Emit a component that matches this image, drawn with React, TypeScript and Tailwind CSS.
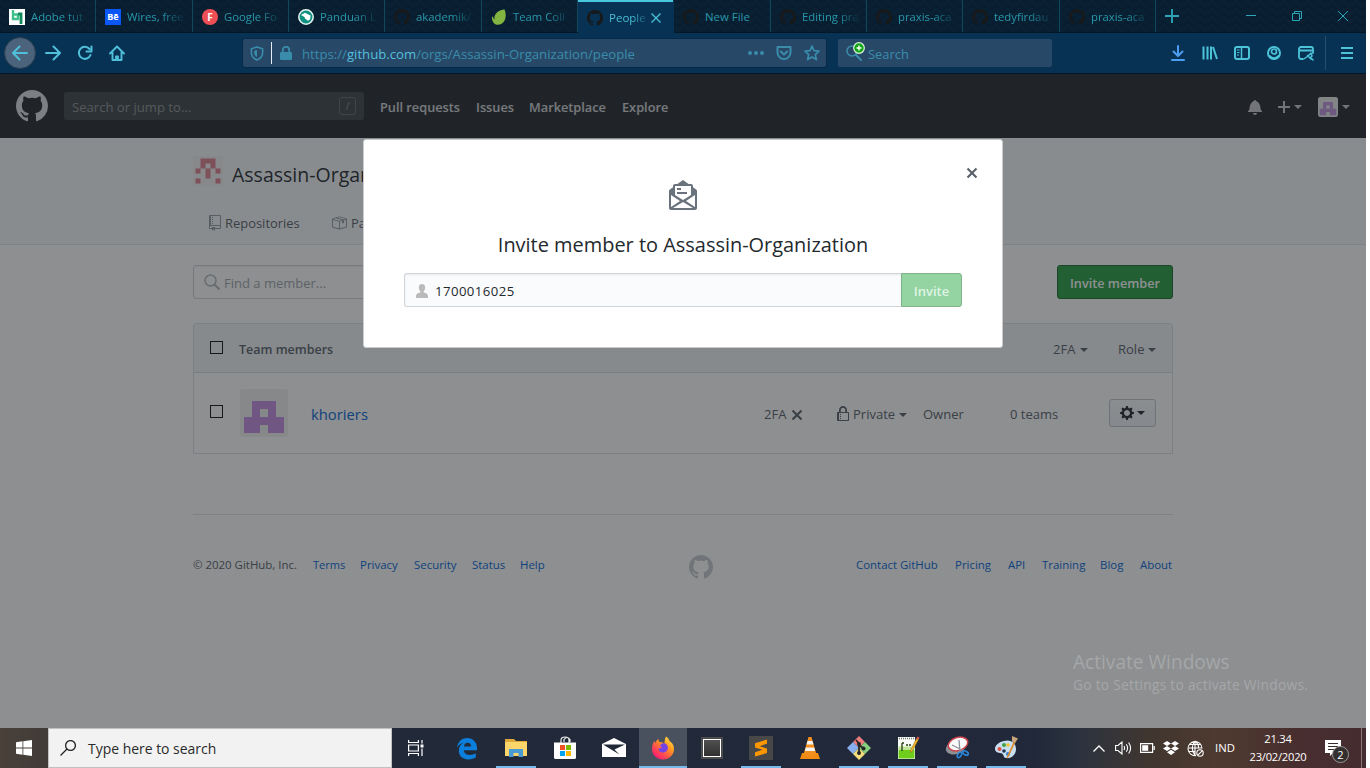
import React from "react";

const MARK =
  "M8 0C3.58 0 0 3.58 0 8c0 3.54 2.29 6.53 5.47 7.59.4.07.55-.17.55-.38 0-.19-.01-.82-.01-1.49-2.01.37-2.53-.49-2.69-.94-.09-.23-.48-.94-.82-1.13-.28-.15-.68-.52-.01-.53.63-.01 1.08.58 1.23.82.72 1.21 1.87.87 2.33.66.07-.52.28-.87.51-1.07-1.78-.2-3.64-.89-3.64-3.95 0-.87.31-1.59.82-2.15-.08-.2-.36-1.02.08-2.12 0 0 .67-.21 2.2.82.64-.18 1.32-.27 2-.27.68 0 1.36.09 2 .27 1.53-1.04 2.2-.82 2.2-.82.44 1.1.16 1.92.08 2.12.51.56.82 1.27.82 2.15 0 3.07-1.87 3.75-3.65 3.95.29.25.54.73.54 1.48 0 1.07-.01 1.93-.01 2.2 0 .21.15.46.55.38A8.013 8.013 0 0016 8c0-4.42-3.58-8-8-8z";
const X_PATH =
  "M7.48 8l3.75 3.75-1.48 1.48L6 9.48l-3.75 3.75-1.48-1.48L4.52 8 .77 4.25l1.48-1.48L6 6.52l3.75-3.75 1.48 1.48L7.48 8z";
const REPO =
  "M4 9H3V8h1v1zm0-3H3v1h1V6zm0-2H3v1h1V4zm0-2H3v1h1V2zm8-1v12c0 .55-.45 1-1 1H6v2l-1.5-1.5L3 16v-2H1c-.55 0-1-.45-1-1V1c0-.55.45-1 1-1h10c.55 0 1 .45 1 1zm-1 10H1v2h2v-1h3v1h5v-2zm0-10H2v9h9V1z";
const PACKAGE =
  "M1 4.27v7.47c0 .45.3.84.75.97l6.5 1.73c.16.05.34.05.5 0l6.5-1.73c.45-.13.75-.52.75-.97V4.27c0-.45-.3-.84-.75-.97l-6.5-1.74a1.4 1.4 0 0 0-.5 0L1.75 3.3c-.45.13-.75.52-.75.97zm7 9.09l-6-1.59V5l6 1.61v6.75zM2 4l2.5-.67L11 5.06l-2.5.67L2 4zm13 7.77l-6 1.59V6.61l2-.55V8.5l2-.53V5.53L15 5v6.77zm-2-7.24L6.5 2.8l2-.53L15 4l-2 .53z";
const BELL =
  "M14 12v1H0v-1l.73-.58c.77-.77.81-2.55 1.19-4.42C2.69 3.23 6 2 6 2c0-.55.45-1 1-1s1 .45 1 1c0 0 3.39 1.23 4.16 5 .38 1.88.42 3.66 1.19 4.42l.66.58H14zm-7 4c1.11 0 2-.89 2-2H5c0 1.11.89 2 2 2z";
const PLUS = "M12 9H7v5H5V9H0V7h5V2h2v5h5v2z";
const GEAR =
  "M14 8.77v-1.6l-1.94-.64-.45-1.09.88-1.84-1.13-1.13-1.81.91-1.09-.45-.69-1.92h-1.6l-.63 1.94-1.11.45-1.84-.88-1.13 1.13.91 1.81-.45 1.09L0 7.23v1.59l1.94.64.45 1.09-.88 1.84 1.13 1.13 1.81-.91 1.09.45.69 1.92h1.59l.63-1.94 1.11-.45 1.84.88 1.13-1.13-.92-1.81.47-1.09L14 8.75v.02zM7 11c-1.66 0-3-1.34-3-3s1.34-3 3-3 3 1.34 3 3-1.34 3-3 3z";
const LOCK =
  "M4 13H3v-1h1v1zm8-6v7c0 .55-.45 1-1 1H1c-.55 0-1-.45-1-1V7c0-.55.45-1 1-1h1V4c0-2.2 1.8-4 4-4s4 1.8 4 4v2h1c.55 0 1 .45 1 1zM3.8 6h4.41V4c0-1.22-.98-2.2-2.2-2.2-1.22 0-2.2.98-2.2 2.2v2H3.8zM11 7H2v7h9V7zM4 8H3v1h1V8zm0 2H3v1h1v-1z";
const MAIL_READ =
  "M6 5H4V4h2v1zm3 1H4v1h5V6zm5-.48V14c0 .55-.45 1-1 1H1c-.55 0-1-.45-1-1V5.52c0-.33.16-.63.42-.81L2 3.58V3c0-.55.45-1 1-1h1.2L7 0l2.8 2H11c.55 0 1 .45 1 1v.58l1.58 1.13c.27.19.42.48.42.81zM3 7.5L7 10l4-2.5V3H3v4.5zm-2 6l4.5-3-4.5-3v6zm11 .5l-5-3-5 3h10zm1-6.5l-4.5 3 4.5 3v-6z";

function Oct({ d, w = 16, className = "" }: { d: string; w?: number; className?: string }) {
  return (
    <svg viewBox={`0 0 ${w} 16`} fill="currentColor" fillRule="evenodd" className={`block shrink-0 ${className}`}>
      <path d={d} />
    </svg>
  );
}

function Caret({ className = "" }: { className?: string }) {
  return <span className={`block h-0 w-0 shrink-0 border-x-4 border-t-4 border-x-transparent border-t-current ${className}`} />;
}

type TabInfo = { title: string; icon: React.ReactNode; active?: boolean; w: string };

const mark = <Oct d={MARK} className="h-4 w-4 text-[#17191b]" />;

const tabs: TabInfo[] = [
  {
    title: "Adobe tut",
    w: "w-[96px]",
    icon: (
      <svg viewBox="0 0 16 16" className="h-4 w-4">
        <rect width="16" height="16" fill="#fff" />
        <path d="M4 1v9h5V5.500H4" fill="none" stroke="#3fc08a" strokeWidth="2.4" />
        <path d="M9 5h3v10" fill="none" stroke="#0f8a5a" strokeWidth="2.800" />
      </svg>
    ),
  },
  {
    title: "Wires, free",
    w: "w-[97px]",
    icon: <span className="flex h-4 w-4 items-center justify-center bg-[#0a57f5] text-[9px] font-bold text-white">Bē</span>,
  },
  {
    title: "Google Fo",
    w: "w-[96px]",
    icon: <span className="flex h-4 w-4 items-center justify-center rounded-full bg-[#ee4f55] text-[10px] font-bold text-white">F</span>,
  },
  {
    title: "Panduan L",
    w: "w-[96px]",
    icon: (
      <svg viewBox="0 0 16 16" className="h-4 w-4">
        <circle cx="8" cy="8" r="7.200" fill="#0f9182" stroke="#e8f4f2" strokeWidth="1.500" />
        <path d="M3 6l4-2.200 5.500 2.700-.3 3.800-2.200 1.400-3-2.200-.5-1.500z" fill="#fff" />
      </svg>
    ),
  },
  { title: "akademik/", w: "w-[97px]", icon: mark },
  {
    title: "Team Coll",
    w: "w-[96px]",
    icon: (
      <svg viewBox="0 0 16 16" className="h-4 w-4">
        <path d="M13.500.4C14.800 3 15.600 9 12.800 12.800 10.500 16 6 17 3 14.300 1.500 12.800.8 10.500 1 8c0-.7 1-.7 1.100.2.3 1.300.8 2 1.400 2.300C2.500 4.500 8 .5 13.500.4z" fill="#82b541" />
      </svg>
    ),
  },
  { title: "People", w: "w-[96px]", icon: mark, active: true },
  { title: "New File", w: "w-[97px]", icon: mark },
  { title: "Editing pra", w: "w-[96px]", icon: mark },
  { title: "praxis-aca", w: "w-[96px]", icon: mark },
  { title: "tedyfirdau", w: "w-[97px]", icon: mark },
  { title: "praxis-aca", w: "w-[96px]", icon: mark },
];

function TabStrip() {
  return (
    <div className="flex h-[33px] border-b border-[#041726] bg-[#0a2134] bg-[linear-gradient(135deg,rgba(3,14,26,0.16)_25%,transparent_25%),linear-gradient(225deg,rgba(3,14,26,0.16)_25%,transparent_25%),linear-gradient(315deg,rgba(3,14,26,0.16)_25%,transparent_25%),linear-gradient(45deg,rgba(3,14,26,0.16)_25%,transparent_25%)] bg-[length:12px_8px] bg-[position:-6px_0,-6px_0,0_0,0_0] text-[#2898aa]">
      {tabs.map((t, i) => (
        <div
          key={i}
          className={`flex shrink-0 items-center border-r pl-[9px] pt-[2px] ${t.w} ${
            t.active ? "-mb-px border-[#083254] bg-[#083254] text-[#48bfd4] shadow-[inset_0_2px_0_#48c8dc]" : "border-[#12465a]"
          }`}
        >
          <span className="mr-[6px] shrink-0">{t.icon}</span>
          <span
            className={`whitespace-nowrap leading-4 ${
              t.active
                ? "w-[38px] text-[11.500px] [mask-image:linear-gradient(90deg,#000_60%,rgba(0,0,0,0.2)_98%)]"
                : t.title === "New File"
                  ? "w-[60px] text-[11.400px]"
                  : "w-[56px] text-[11.300px] [mask-image:linear-gradient(90deg,#000_62%,rgba(0,0,0,0.15)_98%)]"
            }`}
          >
            {t.title}
          </span>
          {t.active && (
            <svg viewBox="0 0 10 10" className="ml-[4px] h-[10px] w-[10px]" stroke="currentColor" strokeWidth="1.400">
              <path d="M.5.500l9 9M9.500.500l-9 9" />
            </svg>
          )}
        </div>
      ))}
      <svg viewBox="0 0 14 14" className="ml-[9px] mt-[9px] h-[14px] w-[14px]" stroke="#2fa6b8" strokeWidth="1.800">
        <path d="M7 0v14M0 7h14" />
      </svg>
      <div className="ml-auto mr-[18px] flex items-center gap-[36px] text-[#2fa6b8]">
        <svg viewBox="0 0 10 10" className="h-[10px] w-[10px]" stroke="currentColor">
          <path d="M0 4.500h10" />
        </svg>
        <svg viewBox="0 0 10 10" className="h-[10px] w-[10px]" stroke="currentColor" fill="none">
          <path d="M.5 2.500h7v7h-7zM2.500 2.500v-2h7v7h-2" />
        </svg>
        <svg viewBox="0 0 10 10" className="h-[10px] w-[10px]" stroke="currentColor">
          <path d="M0 0l10 10M10 0L0 10" />
        </svg>
      </div>
    </div>
  );
}

function I({ children, className = "" }: { children: React.ReactNode; className?: string }) {
  return (
    <svg viewBox="0 0 16 16" fill="none" stroke="currentColor" strokeWidth="2" strokeLinecap="round" strokeLinejoin="round" className={`block h-4 w-4 shrink-0 ${className}`}>
      {children}
    </svg>
  );
}

function Toolbar() {
  return (
    <div className="flex h-[41px] items-center border-b border-[#04172a] bg-[#083254] pl-1 text-[#4fbfda]">
      <span className="flex h-8 w-8 items-center justify-center rounded-full border border-[#2b3d4f] bg-[#4b647c]">
        <I><path d="M15 8H1M7.500 1.500L1 8l6.500 6.500" /></I>
      </span>
      <I className="ml-[9px]"><path d="M1 8h14M8.500 1.500L15 8l-6.500 6.500" /></I>
      <I className="ml-4"><path d="M13.500 10A6 6 0 1 1 12.500 4M14.500 1.500v5h-5" /></I>
      <I className="ml-4"><path d="M1 8.500L8 1.500l7 7M3.500 7.500V15h9V7.500M7 15v-3.500h2V15" strokeWidth="1.900" /></I>
      <div className="ml-[118px] flex h-[28px] w-[583px] items-center rounded-[2px] bg-[#284867] pl-[7px] text-[#3a8cab] shadow-[0_0_0_1px_#072a48]">
        <svg viewBox="0 0 14 16" className="h-[15px] w-[14px]" fill="none" stroke="currentColor" strokeWidth="1.700">
          <path d="M7 1L13 3v4c0 4-2 6.500-6 8-4-1.500-6-4-6-8V3z" />
          <path d="M7 4.200v7.500c-2-1-3-2.300-3-4.700v-2z" fill="currentColor" stroke="none" />
        </svg>
        <span className="ml-[7px] h-[22px] w-px bg-[#e6edf3]" />
        <svg viewBox="0 0 12 14" className="ml-2 h-[14px] w-[12px]" fill="currentColor">
          <rect y="6" width="12" height="8" rx="1.200" />
          <path d="M2.800 7V4a3.200 3.200 0 016.400 0v3" fill="none" stroke="currentColor" strokeWidth="1.800" />
        </svg>
        <span className="ml-[10px] mt-px w-[446px] whitespace-nowrap text-[13.180px] leading-5">
          https://<span className="text-[#55bfdd]">github.com</span>/orgs/Assassin-Organization/people
        </span>
        <svg viewBox="0 0 16 4" className="h-1 w-4" fill="currentColor">
          <circle cx="2" cy="2" r="2" /><circle cx="8" cy="2" r="2" /><circle cx="14" cy="2" r="2" />
        </svg>
        <I className="ml-3"><path d="M1.500 2h13v5.500a6.500 6.500 0 01-13 0zM4.800 6.500L8 9.500l3.200-3" /></I>
        <I className="ml-3"><path d="M8 1l2 4.700 5 .5-3.700 3.400 1 5L8 12l-4.400 2.600 1.100-5L1 6.200l5-.5z" strokeWidth="1.700" /></I>
      </div>
      <div className="ml-3 flex h-[28px] w-[214px] items-center rounded-[2px] bg-[#284867] pl-2 text-[#3a8cab]">
        <span className="relative">
          <I><circle cx="6" cy="6" r="5" strokeWidth="1.500" /><path d="M10 10l5 5" /></I>
          <svg viewBox="0 0 12 12" className="absolute -top-[3px] left-[7px] h-[12px] w-[12px]">
            <circle cx="6" cy="6" r="5.300" fill="#12a512" stroke="#dff3df" strokeWidth="1.200" />
            <path d="M6 3.500v5M3.500 6h5" stroke="#fff" strokeWidth="1.400" />
          </svg>
        </span>
        <span className="ml-[6px] mt-px text-[12.900px] leading-5">Search</span>
      </div>
      <div className="ml-auto mr-[11px] flex items-center text-[#4cc3d9]">
        <div className="flex gap-4">
          <I className="text-[#4a9df0]"><path d="M8 1v9.500M3.500 6.500L8 11l4.500-4.500M2 15h12" /></I>
          <I><path d="M1.500 1.500v13M5.500 1.500v13M9 1.500v13M11 2l4 12" strokeWidth="2" strokeLinecap="butt" /></I>
          <I><rect x="1" y="2" width="14" height="12" rx="2" /><path d="M7.500 2v12" strokeWidth="1.500" /><path d="M3 5h2.500M3 7.500h2.500M3 10h2" strokeWidth="1" strokeLinecap="butt" /></I>
          <I><circle cx="8" cy="8" r="6" /><circle cx="8" cy="6.500" r="2.500" strokeWidth="1.700" /><path d="M3.500 11c3 3 6 3 9 0" /></I>
          <I><path d="M5 14H3a2 2 0 01-2-2V4a2 2 0 012-2h10a2 2 0 012 2v4M1 5.500h14" strokeWidth="1.800" /><path d="M6.500 13.500l3-2M9.500 10.500l3.500 3.500M10 11l3-3 1 3-2 2zM13 13l2 2" strokeWidth="1.500" /></I>
        </div>
        <span className="ml-[11px] h-[34px] w-px bg-[#2b4d6c]" />
        <I className="ml-[13px]"><path d="M2 3h12M2 8h12M2 13h12" strokeLinecap="butt" /></I>
      </div>
    </div>
  );
}

function Identicon({ className = "" }: { className?: string }) {
  return (
    <svg viewBox="0 0 48 48" className={`block shrink-0 ${className}`}>
      <rect width="48" height="48" rx="3" fill="#f0f0f0" />
      <path d="M12 12h24v16h8v16H28v-8h-8v8H4V28h8zM20 20v8h8v-8z" fillRule="evenodd" fill="#c28ce2" />
    </svg>
  );
}

function OrgIcon() {
  return (
    <svg viewBox="0 0 30 30" className="h-[30px] w-[30px] shrink-0">
      <rect width="30" height="30" fill="#f0f0f0" />
      <path
        d="M7.500 2.500H22.500V12.500H17.500V7.500H12.500V12.500H7.500zM2.500 12.500H7.500V17.500H2.500zM22.500 12.500H27.500V17.500H22.500zM12.500 12.500H17.500V22.500H12.500zM2.500 22.500H7.500V27.500H2.500zM22.500 22.500H27.500V27.500H22.500z"
        fill="#e08090"
      />
    </svg>
  );
}

function GitHubHeader() {
  return (
    <div className="flex h-16 items-center bg-[#24292e] px-4 text-[12.750px] font-semibold leading-5 text-white/80">
      <Oct d={MARK} className="h-8 w-8 text-white/85" />
      <div className="ml-4 mr-4 flex h-[28px] w-[300px] items-center justify-between rounded-[3px] bg-[#3f4448] pl-2 pr-2 font-normal text-[#8f9395]">
        <span className="mt-[2px] text-[13.100px]">Search or jump to...</span>
        <span className="flex h-[18px] w-[17px] items-center justify-center rounded-[3px] border border-[#666b6f] text-[10px]">/</span>
      </div>
      <span className="mt-[2px] w-[96px] whitespace-nowrap">Pull requests</span>
      <span className="mt-[2px] w-[53px]">Issues</span>
      <span className="mt-[2px] w-[93px]">Marketplace</span>
      <span className="mt-[2px]">Explore</span>
      <div className="ml-auto mt-[2px] flex items-center text-white/75">
        <Oct d={BELL} w={14} className="mr-4 h-4 w-[14px]" />
        <Oct d={PLUS} w={12} className="mr-1 h-4 w-[12px]" />
        <Caret className="mr-4" />
        <span className="mr-1 overflow-hidden rounded-[3px] bg-white/70"><Identicon className="h-5 w-5 opacity-85" /></span>
        <Caret />
      </div>
    </div>
  );
}

function Checkbox() {
  return <span className="block h-[13px] w-[13px] border border-[#111]" />;
}

function Page() {
  return (
    <div className="h-[654px] bg-white text-[#586069]">
      <GitHubHeader />
      <div className="h-[107px] border-b border-[#e1e4e8] bg-[#f6f9fa] pl-[193px] pt-[18px]">
        <div className="flex">
          <OrgIcon />
          <span className="ml-[9px] mt-1 text-[19.500px] leading-[30px] text-[#24292e]">Assassin-Organization</span>
        </div>
        <div className="ml-4 mt-[23px] flex items-center text-[12.950px] leading-5">
          <Oct d={REPO} w={12} className="h-4 w-3 text-[#959da5]" />
          <span className="ml-1 w-[106px]">Repositories</span>
          <Oct d={PACKAGE} className="h-4 w-4 text-[#959da5]" />
          <span className="ml-1">Packages</span>
        </div>
      </div>
      <div className="ml-[193px] w-[980px]">
        <div className="flex justify-between pt-5">
          <div className="flex h-[34px] w-[300px] items-center rounded-[3px] border border-[#d1d5da] pl-[10px] text-[13px] text-[#a0a5aa] shadow-[inset_0_1px_2px_rgba(27,31,35,0.075)]">
            <svg viewBox="0 0 16 16" className="h-4 w-4" fill="none" stroke="#b4b8bb" strokeWidth="1.500">
              <circle cx="6.500" cy="6.500" r="5.500" /><path d="M10.500 10.500l5 5" strokeWidth="2" />
            </svg>
            <span className="ml-1 mt-[3px]">Find a member...</span>
          </div>
          <div className="flex h-[34px] w-[116px] items-center justify-center rounded-[3px] border border-[#1c6a30] bg-[#28a142] pt-[3px] text-[12.700px] font-semibold text-white">
            Invite member
          </div>
        </div>
        <div className="mt-6 h-[131px] rounded-t-[3px] border border-[#dde1e5] text-[13px]">
          <div className="flex h-[49px] items-center border-b border-[#d5dadf] bg-[#f1f5f7] pl-4">
            <span className="-mt-px"><Checkbox /></span>
            <span className="ml-4 mt-[4px] w-[814px] text-[12.500px] font-semibold">Team members</span>
            <span className="mt-[4px] w-[27px]">2FA</span>
            <Caret className="mr-[30px] mt-[4px]" />
            <span className="mt-[4px] w-[30px]">Role</span>
            <Caret className="mt-[4px]" />
          </div>
          <div className="flex h-[80px] items-center pl-4">
            <span className="-mt-1"><Checkbox /></span>
            <Identicon className="ml-[17px] h-12 w-12" />
            <span className="ml-[23px] mt-[2px] w-[453px] text-[14.800px] text-[#0366d6]">khoriers</span>
            <span className="mt-[3px] w-[27px]">2FA</span>
            <Oct d={X_PATH} w={12} className="mt-[3px] h-4 w-3" />
            <Oct d={LOCK} w={12} className="ml-[34px] mt-[2px] h-4 w-3" />
            <span className="ml-1 mt-[3px] w-[46px]">Private</span>
            <Caret className="mt-[3px]" />
            <span className="ml-4 mt-[3px] w-[87px]">Owner</span>
            <span className="mt-[3px] w-[99px]">0 teams</span>
            <span className="flex h-[28px] w-[47px] items-center justify-center gap-[3px] rounded-[3px] border border-[#c3c7ca] bg-gradient-to-b from-[#fafbfc] to-[#eff3f6] text-[#24292e]">
              <Oct d={GEAR} w={14} className="h-4 w-[14px]" />
              <Caret />
            </span>
          </div>
        </div>
        <div className="mt-[60px] flex items-start border-t border-[#e1e4e8] pt-[40px] text-[11.450px] leading-[20px]">
          <span className="w-[120px] whitespace-nowrap">© 2020 GitHub, Inc.</span>
          <span className="flex w-[376px] text-[#0366d6]">
            <span className="w-[47px] text-[11px]">Terms</span>
            <span className="w-[54px]">Privacy</span>
            <span className="w-[58px]">Security</span>
            <span className="w-[48px]">Status</span>
            <span>Help</span>
          </span>
          <Oct d={MARK} className="h-6 w-6 text-[#c6cbd1]" />
          <span className="ml-auto flex text-[#0366d6]">
            <span className="w-[99px]">Contact GitHub</span>
            <span className="w-[53px]">Pricing</span>
            <span className="w-[34px]">API</span>
            <span className="w-[58px]">Training</span>
            <span className="w-[40px]">Blog</span>
            <span className="w-[33px]">About</span>
          </span>
        </div>
      </div>
    </div>
  );
}

function Modal() {
  return (
    <div className="absolute left-[363px] top-[65px] flex h-[209px] w-[640px] flex-col items-center rounded-[3px] border border-[#c9cbcd] bg-white px-10 pt-[40px] text-[#24292e]">
      <Oct d={X_PATH} w={12} className="absolute right-6 top-[25px] h-4 w-3 text-[#586069]" />
      <Oct d={MAIL_READ} w={14} className="h-8 w-[28px] text-[#6a737d]" />
      <h2 className="mt-[18px] whitespace-nowrap text-[19.950px] leading-[30px]">Invite member to Assassin-Organization</h2>
      <div className="mt-[13px] flex h-[34px] w-[558px]">
        <div className="flex flex-1 items-center rounded-l-[3px] border border-r-0 border-[#d1d5da] bg-[#fafbfc] pl-[11px] shadow-[inset_0_1px_2px_rgba(27,31,35,0.075)]">
          <svg viewBox="0 0 12 14" className="mt-[1px] h-[14px] w-3" fill="#bababa">
            <path d="M6 0c2 0 3.200 1.300 3.200 3.300 0 1.700-.6 3-1.500 3.900v1.300c2.800.7 4.300 1.400 4.300 3.700V14H0v-1.800c0-2.300 1.500-3 4.300-3.700V7.200C3.400 6.300 2.800 5 2.800 3.300 2.800 1.300 4 0 6 0z" />
          </svg>
          <span className="ml-[7px] mt-[2px] text-[13.200px] leading-5 tracking-[0.42px]">1700016025</span>
        </div>
        <div className="flex w-[61px] items-center justify-center rounded-r-[3px] border border-[#7fb38c] bg-[#94d3a2] pt-[3px] text-[13px] font-semibold text-[#dff5e4]">
          Invite
        </div>
      </div>
    </div>
  );
}

const apps: { on?: boolean; focus?: boolean; icon: React.ReactNode }[] = [
  {
    icon: (
      <svg viewBox="0 0 24 24" className="h-6 w-6">
        <path d="M2 11.500C3 5 7.500 2 12.300 2 18 2 22 6.500 22 12v2.300H8.800c.2 3 2.700 4.700 6 4.700 2.200 0 4.200-.6 6-1.700v4.300c-2 1.200-4.500 1.800-7.200 1.800-6 0-9.800-3.700-9.800-9 0-3.300 1.700-6 4.700-7.700C5.500 7.600 3.500 9 2 11.500zM8.900 10.500h7.300c-.1-2.300-1.400-3.700-3.500-3.700s-3.500 1.500-3.800 3.700z" fill="#0c7fdc" fillRule="evenodd" />
      </svg>
    ),
  },
  {
    on: true,
    icon: (
      <svg viewBox="0 0 24 24" className="h-6 w-6">
        <path d="M1 3h9l2 2h11v4H1z" fill="#e0a73a" /><path d="M1 6h22v14H1z" fill="#fcd66b" />
        <path d="M5 13h14v8h-4.500v-4h-5v4H5z" fill="#4a9bd3" />
      </svg>
    ),
  },
  {
    icon: (
      <svg viewBox="0 0 24 24" className="h-6 w-6">
        <path d="M8 7V4q0-3 4-3t4 3v3M11 6V3.500q3-4 6 0V6" fill="none" stroke="#eee" strokeWidth="1.200" />
        <path d="M1 6.500h22V22l-1 1H2l-1-1z" fill="#fff" />
        <path d="M7 9h5v5H7z" fill="#f25022" /><path d="M13 9h5v5h-5z" fill="#7fba00" /><path d="M7 15h5v5H7z" fill="#00a4ef" /><path d="M13 15h5v5h-5z" fill="#ffb900" />
      </svg>
    ),
  },
  {
    icon: (
      <svg viewBox="0 0 24 24" className="h-6 w-6">
        <path d="M0 8l12-6 12 6v13H0z" fill="#fff" /><path d="M1 8.500h22L12.500 13.500l5 5L10 14z" fill="#1f2836" />
      </svg>
    ),
  },
  {
    on: true,
    focus: true,
    icon: (
      <svg viewBox="0 0 24 24" className="h-6 w-6">
        <defs>
          <linearGradient id="fx" x1="1" y1="0" x2="0.200" y2="1"><stop offset="0" stopColor="#fff14f" /><stop offset="0.400" stopColor="#ff9a20" /><stop offset="0.750" stopColor="#ff4355" /><stop offset="1" stopColor="#f4157a" /></linearGradient>
        </defs>
        <path d="M15 .5c2 1 3 3 3.500 4.500C20 6 23 8 23 13c0 6-5 10.500-11 10.500S1 19 1 13c0-4 1.500-6.500 2.300-8l1 2c1-2.200 2.200-3.500 3-4l1 3c2 0 4 .5 5 1.500.5-2.500.5-5 1.700-7z" fill="url(#fx)" />
        <path d="M11 7.500c4-1 6.500 2 5.800 5.200-.6 3-4 4.700-7 3.300-2-1-2.600-2.700-1.800-4 1 .6 2.500.5 3-.6-2-.3-2.300-2 0-3.900z" fill="#7542e5" />
      </svg>
    ),
  },
  {
    icon: (
      <span className="flex h-[22px] w-[22px] items-center justify-center bg-[#4c4c4c]">
        <span className="h-[18px] w-[18px] border border-white bg-gradient-to-b from-[#505050] to-[#303030]" />
      </span>
    ),
  },
  {
    on: true,
    icon: (
      <svg viewBox="0 0 24 24" className="h-6 w-6">
        <rect width="24" height="24" rx="1" fill="#484848" />
        <path d="M18 3.500v4.200l-7.500 2.500 7.500 2.300v4.500L6 20.500v-4.300l7.500-2.400L6 11.500V7.200z" fill="#ff9800" />
      </svg>
    ),
  },
  {
    icon: (
      <svg viewBox="0 0 24 24" className="h-6 w-6">
        <path d="M4 17h16l2 6H2z" fill="#f08a10" /><path d="M10.500 1h3l5 17.500c-3 2.500-10 2.500-13 0z" fill="#f18e1c" />
        <path d="M9.500 5h5l1 3.500h-7zM7.800 11.500h8.400l1 3.500H6.800z" fill="#f2f2f2" />
      </svg>
    ),
  },
  {
    on: true,
    icon: (
      <svg viewBox="0 0 24 24" className="h-6 w-6">
        <path d="M12 0l6 6-6 6-6-6z" fill="#ef7d7d" /><path d="M6 6l6 6-6 6-6-6z" fill="#88b0ee" /><path d="M18 6l6 6-6 6-6-6z" fill="#86cf7d" /><path d="M12 12l6 6-6 6-6-6z" fill="#f5df7c" />
        <path d="M9 4l3 3.500V18M12 9l4 3v2" fill="none" stroke="#262626" strokeWidth="1.800" /><circle cx="12" cy="8" r="2" fill="#262626" /><circle cx="16.500" cy="12.500" r="2" fill="#262626" /><circle cx="12" cy="17" r="2" fill="#262626" />
      </svg>
    ),
  },
  {
    on: true,
    icon: (
      <svg viewBox="0 0 24 24" className="h-6 w-6">
        <path d="M2 1h17v22H2z" fill="#f8faf5" /><path d="M2.500 14h16v8.500h-16z" fill="#6fce1c" /><path d="M2.500 10.500h16V14h-16z" fill="#bfe594" />
        <path d="M3 2.500h15" stroke="#777" strokeDasharray="1 1" strokeWidth="1.500" /><path d="M6 7v8M6 7h2M10 9h2M13 9h2" stroke="#263b12" strokeWidth="1.300" />
        <path d="M20.500 2.500l2 1-6.500 12-1.700 1 .4-2.500z" fill="#f5b92b" stroke="#8c6518" strokeWidth=".5" /><path d="M20.500 2.500l2 1 1-2-2-1z" fill="#dd5a5a" />
      </svg>
    ),
  },
  {
    on: true,
    icon: (
      <svg viewBox="0 0 24 24" className="h-6 w-6">
        <ellipse cx="11" cy="11" rx="10.500" ry="7" transform="rotate(-22 11 11)" fill="#8c9096" />
        <ellipse cx="13" cy="8" rx="10" ry="6.500" transform="rotate(-18 13 8)" fill="#fafafa" stroke="#c9444a" strokeWidth="1.500" />
        <path d="M7 9l10 5M14 4l1 12" stroke="#8b929b" strokeWidth="1.300" />
        <ellipse cx="14.500" cy="19" rx="1.700" ry="3" transform="rotate(35 14.500 19)" fill="none" stroke="#2a86d8" strokeWidth="1.600" /><ellipse cx="20.500" cy="17" rx="3" ry="1.800" transform="rotate(30 20.500 17)" fill="none" stroke="#2a86d8" strokeWidth="1.600" />
      </svg>
    ),
  },
  {
    on: true,
    icon: (
      <svg viewBox="0 0 24 24" className="h-6 w-6">
        <path d="M10 5c7-2 12 2 12 8s-5 10-10 9c-3-.6-2-3.500-4-4.500S1 17 1 13s4-7 9-8z" fill="#c8dff2" />
        <circle cx="10" cy="9" r="2" fill="#43a047" /><circle cx="5.500" cy="13" r="2" fill="#e0503c" /><circle cx="14" cy="9" r="1.800" fill="#f2c230" /><circle cx="10" cy="15" r="1.800" fill="#1d3550" /><circle cx="14" cy="18" r="2" fill="#2f7dd1" />
        <path d="M20 5l1.500 1L14 22l-1.500-.5z" fill="#e08b2c" /><path d="M18 0l6 2.500L21 7l-3-1.500z" fill="#c9a37b" />
      </svg>
    ),
  },
];

function Taskbar() {
  return (
    <div className="flex h-10 bg-[linear-gradient(90deg,#4a4139_0,#403b38_48px,#222a3a_392px,#202839_1030px,#2c333f_1080px,#40362f_1150px,#4e3a30_1220px,#482e2f_1300px,#452c30_1366px)] text-white">
      <div className="flex w-12 items-center justify-center">
        <svg viewBox="0 0 16 16" className="h-4 w-4" fill="#fff">
          <path d="M0 2.200L6.500 1.300v6.300H0zM7.300 1.200L16 0v7.600H7.300zM0 8.400h6.500v6.300L0 13.800zM7.300 8.400H16V16l-8.700-1.200z" />
        </svg>
      </div>
      <div className="flex w-[344px] items-center border border-[#c0c0c0] bg-[#f2f2f2] pl-[11px] text-[#2b2b2b]">
        <svg viewBox="0 0 16 16" className="h-4 w-4" fill="none" stroke="#222" strokeWidth="1.300">
          <circle cx="10.500" cy="5.500" r="4.900" /><path d="M7 9L.5 15.500" />
        </svg>
        <span className="ml-3 mt-[2px] text-[13.950px] leading-5">Type here to search</span>
      </div>
      <div className="mr-[3px] flex w-12 items-center justify-center">
        <svg viewBox="0 0 16 16" className="h-4 w-4" fill="none" stroke="#fff" strokeWidth="1.200">
          <path d="M.6 0v2.500h9.800V0M.6 16v-2.500h9.800V16M.6 5h9.800v6H.6zM14 0v3.500M14 8.500V16" /><path d="M12.500 4.500h3v3h-3z" fill="#fff" stroke="none" />
        </svg>
      </div>
      <div className="flex gap-px">
        {apps.map((a, i) => (
          <div key={i} className={`flex w-12 flex-col items-center ${a.focus ? "bg-[#4a515e]" : ""}`}>
            <span className="flex h-[38px] items-center pt-[2px]">{a.icon}</span>
            {a.on && <span className={`h-[2px] bg-[#76b9ed] ${a.focus ? "w-12" : "w-10"}`} />}
          </div>
        ))}
      </div>
      <div className="ml-auto mr-[4px] flex items-center">
        <span className="flex w-[24px] justify-center">
          <svg viewBox="0 0 12 7" className="h-[7px] w-3" fill="none" stroke="#fff" strokeWidth="1.300"><path d="M.5 6.500L6 1l5.500 5.500" /></svg>
        </span>
        <span className="flex w-[24px] justify-center">
          <svg viewBox="0 0 17 14" className="h-[14px] w-[17px]" fill="none" stroke="#fff" strokeWidth="1.100"><path d="M.6 4.500v5h2.400L7 13V1L3 4.500zM9 5q1.200 2 0 4M11.300 3.200q2.600 3.800 0 7.600M13.600 1.500q4 5.500 0 11" /></svg>
        </span>
        <span className="flex w-[24px] justify-center">
          <svg viewBox="0 0 15 10" className="h-[10px] w-[15px]" fill="none" stroke="#fff" strokeWidth="1.200"><path d="M.6.600h12v8.800H.6zM14.200 3v4" /><path d="M2.200 2.200h6v5.600h-6z" fill="#fff" stroke="none" /></svg>
        </span>
        <span className="flex w-[24px] justify-center">
          <svg viewBox="0 0 16 14" className="h-[14px] w-4" fill="#fff"><path d="M4 0l4 2.500L4 5 0 2.500zM12 0l4 2.500L12 5 8 2.500zM4 5l4 2.500L4 10 0 7.500zM12 5l4 2.500L12 10 8 7.500zM8 8.800l4 2.500L8 14l-4-2.700z" /></svg>
        </span>
        <span className="flex w-[24px] justify-center">
          <svg viewBox="0 0 17 17" className="h-[17px] w-[17px]" fill="none" stroke="#fff" strokeWidth="1.100"><path d="M9 15.500A7 7 0 1115 8.500M8 1v14M1 8h14M2.500 4.500h11M2 11.500h6M8 1Q2.500 8 8 15M8 1q4 3.500 3.500 7" /><circle cx="13" cy="13" r="3.200" /><path d="M10.800 15.200l4.400-4.400" /></svg>
        </span>
        <span className="ml-2 w-[34px] text-[11.300px]">IND</span>
        <span className="w-[58px] whitespace-nowrap text-center text-[11.200px] leading-[18px] tracking-[-0.250px]">21.34<br />23/02/2020</span>
        <span className="relative ml-[18px] w-[36px]">
          <svg viewBox="0 0 16 16" className="h-4 w-4"><path d="M0 0h16v13H8l-3 3v-3H0z" fill="#fff" /><path d="M3 3.500h10M3 6.500h10M3 9.500h7" stroke="#3a2a2a" /></svg>
          <span className="absolute left-[7px] top-[6px] flex h-[17px] w-[17px] items-center justify-center rounded-full border border-[#999] bg-[#33302f] text-[11px] leading-none">2</span>
        </span>
        <span className="h-10 w-px bg-[#8a7672]" />
      </div>
    </div>
  );
}

export default function App() {
  return (
    <div className="min-h-screen bg-white">
      <div className="flex h-[768px] w-[1366px] flex-col overflow-hidden font-['Open_Sans','Noto_Sans',sans-serif]">
        <TabStrip />
        <Toolbar />
        <div className="relative">
          <Page />
          <div className="absolute inset-0 bg-[rgba(27,31,35,0.5)]" />
          <Modal />
          <div className="absolute left-[1073px] top-[576px] whitespace-nowrap text-[#a5a7a9]">
            <p className="text-[19.100px] leading-[25px]">Activate Windows</p>
            <p className="text-[13.800px] leading-[20px] tracking-[0.260px]">Go to Settings to activate Windows.</p>
          </div>
        </div>
        <Taskbar />
      </div>
    </div>
  );
}
